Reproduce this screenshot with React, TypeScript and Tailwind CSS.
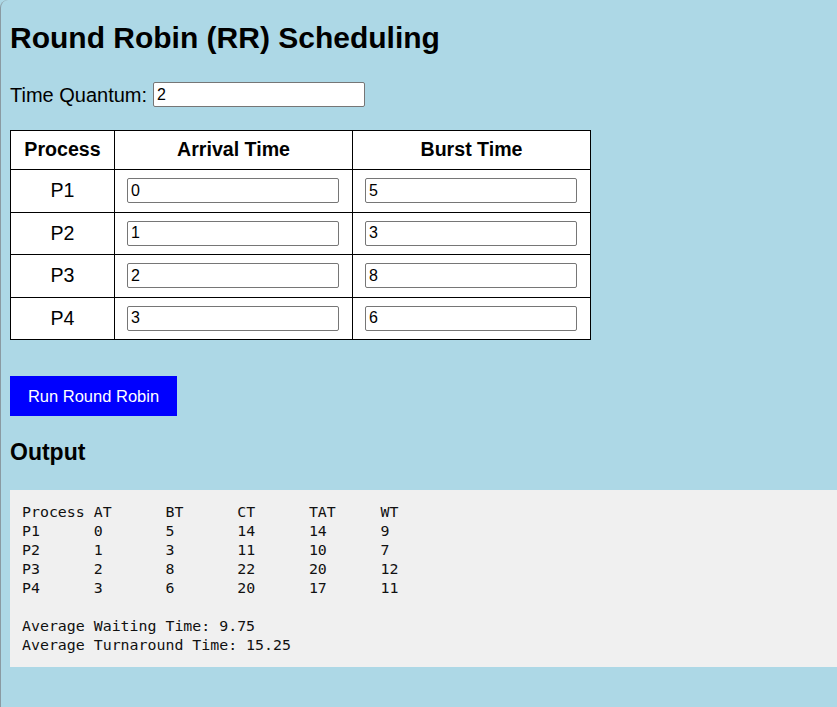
const processes = [
  { name: 'P1', at: '0', bt: '5' },
  { name: 'P2', at: '1', bt: '3' },
  { name: 'P3', at: '2', bt: '8' },
  { name: 'P4', at: '3', bt: '6' },
]

const output = `Process\tAT\tBT\tCT\tTAT\tWT
P1\t0\t5\t14\t14\t9
P2\t1\t3\t11\t10\t7
P3\t2\t8\t22\t20\t12
P4\t3\t6\t20\t17\t11

Average Waiting Time: 9.75
Average Turnaround Time: 15.25`

export default function App() {
  return (
    <div className="bg-[#add8e6] min-h-[707px]">
      <div className="min-h-[707px] border-l border-[#8a9aa2] rounded-tl-[8px] pl-[9px] pt-[21px] text-black font-['Liberation_Sans',Arial,sans-serif]">
        <h1 className="text-[30px] leading-[34px] font-bold">Round Robin (RR) Scheduling</h1>

        <div className="mt-[27px] flex items-center gap-[6px] h-[25px]">
          <label className="text-[20px]">Time Quantum:</label>
          <input
            type="number"
            defaultValue="2"
            className="w-[212px] h-[25px] bg-white border border-[#767676] rounded-[2px] px-[3px] text-[16px] outline-none [appearance:textfield]"
          />
        </div>

        <table className="mt-[23px] border-collapse bg-white">
          <thead>
            <tr>
              <th className="w-[104px] h-[39px] border border-black text-[19.6px] font-bold">Process</th>
              <th className="w-[238px] h-[39px] border border-black text-[19.6px] font-bold">Arrival Time</th>
              <th className="w-[238px] h-[39px] border border-black text-[19.6px] font-bold">Burst Time</th>
            </tr>
          </thead>
          <tbody>
            {processes.map((p) => (
              <tr key={p.name}>
                <td className="h-[42.5px] border border-black text-center text-[19.6px]">{p.name}</td>
                <td className="h-[42.5px] border border-black pl-[12px] pr-[13px] align-middle">
                  <input
                    type="number"
                    defaultValue={p.at}
                    className="block w-[212px] h-[25px] bg-white border border-[#767676] rounded-[2px] px-[3px] text-[16px] outline-none [appearance:textfield]"
                  />
                </td>
                <td className="h-[42.5px] border border-black px-[12px] align-middle">
                  <input
                    type="number"
                    defaultValue={p.bt}
                    className="block w-[212px] h-[25px] bg-white border border-[#767676] rounded-[2px] px-[3px] text-[16px] outline-none [appearance:textfield]"
                  />
                </td>
              </tr>
            ))}
          </tbody>
        </table>

        <button className="mt-[36px] block w-[167px] h-[40px] bg-[#0000ff] text-white text-[16.5px]">
          Run Round Robin
        </button>

        <h2 className="mt-[23px] text-[23px] leading-[26px] font-bold">Output</h2>

        <pre className="mt-[25px] bg-[#f0f0f0] pl-[12px] pt-[13px] pb-[12px] text-[14.9px] leading-[19px] text-[#111] font-['DejaVu_Sans_Mono',monospace] [tab-size:8]">
          {output}
        </pre>
      </div>
    </div>
  )
}
